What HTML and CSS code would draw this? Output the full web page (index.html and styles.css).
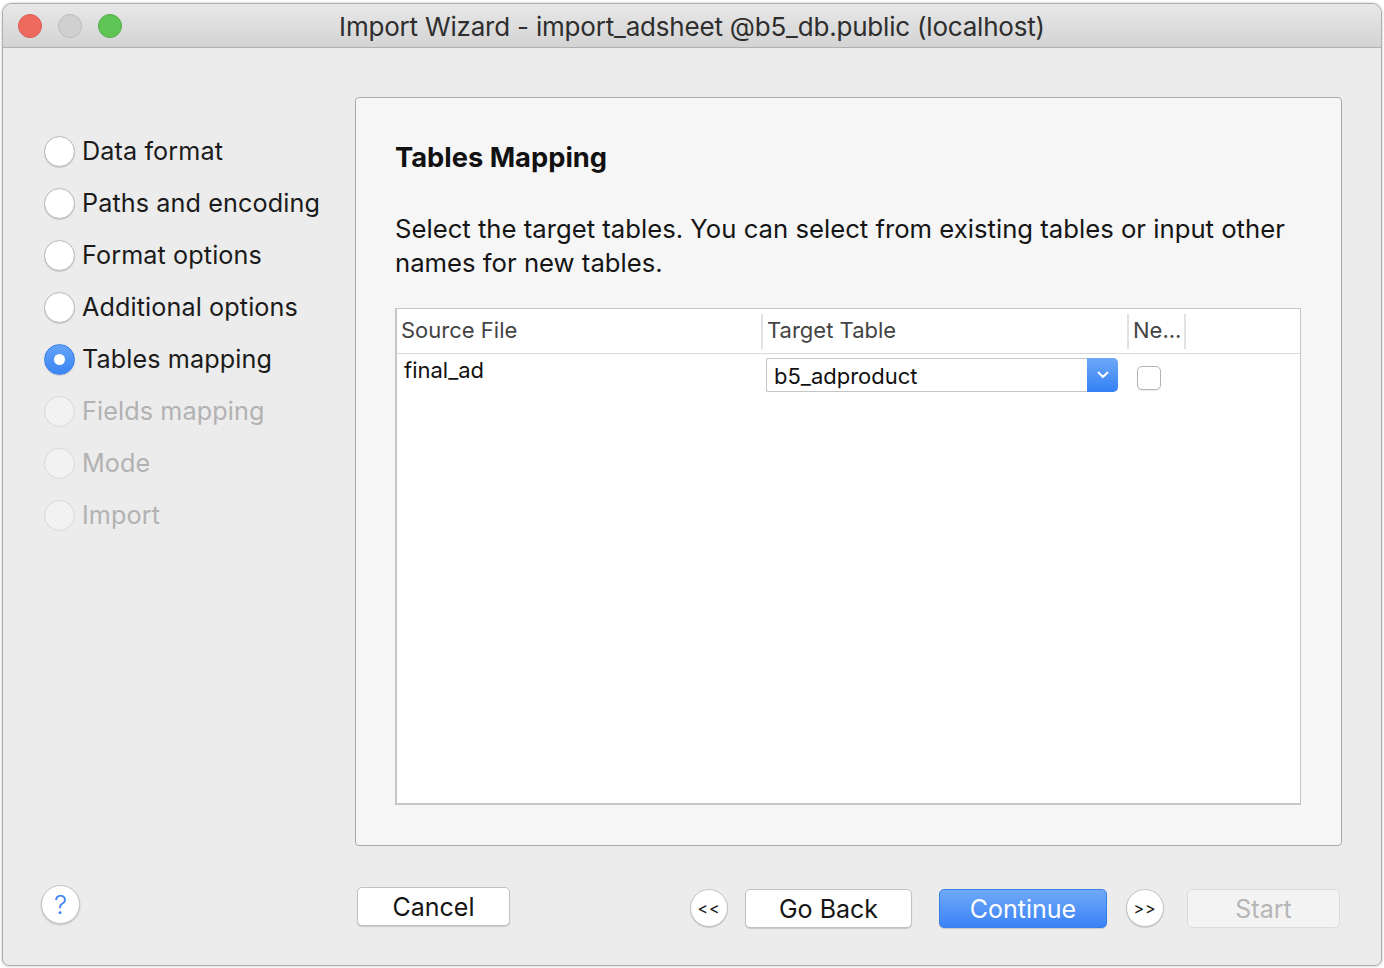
FILE: index.html
```html
<!DOCTYPE html>
<html>
<head>
<meta charset="utf-8">
<title>Import Wizard</title>
<link rel="stylesheet" href="styles.css">
</head>
<body>
<div class="window">
  <div class="titlebar">
    <div class="lights">
      <span class="light red"></span>
      <span class="light gray"></span>
      <span class="light green"></span>
    </div>
    <div class="title">Import Wizard - import_adsheet @b5_db.public (localhost)</div>
  </div>
  <div class="content">
    <ul class="steps">
      <li class="step"><span class="radio"></span>Data format</li>
      <li class="step"><span class="radio"></span>Paths and encoding</li>
      <li class="step"><span class="radio"></span>Format options</li>
      <li class="step"><span class="radio"></span>Additional options</li>
      <li class="step current"><span class="radio"></span>Tables mapping</li>
      <li class="step disabled"><span class="radio"></span>Fields mapping</li>
      <li class="step disabled"><span class="radio"></span>Mode</li>
      <li class="step disabled"><span class="radio"></span>Import</li>
    </ul>
    <section class="panel">
      <h1 class="heading">Tables Mapping</h1>
      <p class="desc">Select the target tables. You can select from existing tables or input other names for new tables.</p>
      <div class="table">
        <div class="thead">
          <div class="th c1">Source File</div>
          <div class="th c2">Target Table</div>
          <div class="th c3">Ne...</div>
        </div>
        <div class="row">
          <div class="td c1">final_ad</div>
          <div class="td c2">
            <div class="combo">
              <span class="combo-text">b5_adproduct</span>
              <span class="combo-btn">
                <svg width="12" height="8" viewBox="0 0 12 8"><path d="M1.5 1.5 L6 6 L10.5 1.5" fill="none" stroke="#fff" stroke-width="2" stroke-linecap="round" stroke-linejoin="round"/></svg>
              </span>
            </div>
          </div>
          <div class="td c3"><span class="check"></span></div>
        </div>
      </div>
    </section>
    <div class="help-cell"><span class="help">?</span></div>
    <div class="buttons">
      <span class="btn cancel">Cancel</span>
      <span class="spacer"></span>
      <span class="round">&lt;&lt;</span>
      <span class="btn back">Go Back</span>
      <span class="btn primary">Continue</span>
      <span class="round next">&gt;&gt;</span>
      <span class="btn disabled-btn">Start</span>
    </div>
  </div>
</div>
</body>
</html>
```
FILE: styles.css
```css
* { box-sizing: border-box; }
html, body { margin: 0; padding: 0; }
body {
  background: #ffffff;
  font-family: Inter, "Liberation Sans", Arial, sans-serif;
  color: #1b1b1b;
  width: 1384px;
  height: 968px;
  overflow: hidden;
}
.window {
  margin: 3px 2px 0 2px;
  height: 963px;
  border: 1px solid #aeaeae;
  border-radius: 10px 10px 7px 7px;
  background: #ececec;
  overflow: hidden;
  display: flex;
  flex-direction: column;
  box-shadow: 0 0 3px rgba(0,0,0,0.25);
}
.titlebar {
  height: 44px;
  flex: none;
  background: linear-gradient(#e8e8e8, #d3d3d3);
  border-bottom: 1px solid #b0b0b0;
  display: flex;
  align-items: center;
  position: relative;
}
.lights {
  display: flex;
  gap: 16px;
  padding-left: 15px;
}
.light {
  width: 24px;
  height: 24px;
  border-radius: 50%;
  display: block;
}
.light.red { background: #ee6a5f; border: 1px solid #d65a4f; }
.light.gray { background: #d0d0d0; border: 1px solid #bcbcbc; }
.light.green { background: #5fc655; border: 1px solid #4fae46; }
.title {
  position: absolute;
  left: 0;
  right: 0;
  top: 0;
  bottom: 0;
  display: flex;
  align-items: center;
  justify-content: center;
  font-size: 26px;
  color: #2e2e2e;
  letter-spacing: -0.2px;
  padding-top: 1px;
}
.content {
  flex: 1;
  display: grid;
  grid-template-columns: 352px 1fr;
  grid-template-rows: 749px auto;
  padding: 49px 39px 0 0;
}
.steps {
  list-style: none;
  margin: 0;
  padding: 28px 0 0 41px;
}
.step {
  height: 52px;
  display: flex;
  align-items: center;
  gap: 7px;
  font-size: 25.2px;
  color: #1b1b1b;
  letter-spacing: 0.1px;
}
.radio {
  width: 31px;
  height: 31px;
  border-radius: 50%;
  background: #ffffff;
  border: 1px solid #b8b8b8;
  box-shadow: 0 1px 1px rgba(0,0,0,0.12);
  flex: none;
  display: flex;
  align-items: center;
  justify-content: center;
}
.step.current .radio {
  background: linear-gradient(#64a3f8, #3a85f5);
  border-color: #3a7fe6;
}
.step.current .radio::after {
  content: "";
  width: 11px;
  height: 11px;
  border-radius: 50%;
  background: #ffffff;
}
.step.disabled { color: #b2b2b2; }
.step.disabled .radio {
  background: #f2f2f2;
  border-color: #d8d8d8;
  box-shadow: none;
}
.panel {
  background: #f6f6f6;
  border: 1px solid #a9a9a9;
  border-radius: 4px;
  padding: 43px 40px 40px 39px;
  display: flex;
  flex-direction: column;
}
.heading {
  margin: 0;
  font-size: 27.3px;
  font-weight: 700;
  line-height: 34px;
  color: #111;
}
.desc {
  margin: 37px 0 0 0;
  font-size: 25.7px;
  line-height: 34px;
  color: #151515;
  padding-right: 10px;
}
.table {
  margin-top: 28px;
  flex: 1;
  background: #ffffff;
  border: 2px solid #c6c6c6;
  border-top-width: 1px;
  border-right-width: 1px;
}
.thead {
  height: 45px;
  border-bottom: 1px solid #d9d9d9;
  display: flex;
  align-items: center;
}
.th {
  height: 35px;
  display: flex;
  align-items: center;
  font-size: 22px;
  color: #444;
  border-right: 2px solid #e2e2e2;
  padding-left: 4px;
  padding-bottom: 2px;
  white-space: nowrap;
}
.c1 { width: 366px; }
.c2 { width: 366px; padding-left: 4px; }
.c3 { width: 57px; padding-left: 4px; }
.row {
  display: flex;
  height: 44px;
}
.td {
  font-size: 22px;
  color: #111;
}
.row .c1 { padding: 3px 0 0 7px; }
.row .c2 { padding: 4px 0 0 3px; }
.row .c3 { padding: 12px 0 0 8px; }
.combo {
  width: 352px;
  height: 34px;
  border: 1px solid #c5c5c5;
  border-right: none;
  border-radius: 2px 5px 5px 2px;
  display: flex;
  align-items: center;
  background: #fff;
}
.combo-text {
  flex: 1;
  padding-left: 7px;
  padding-top: 2px;
  font-size: 22px;
  color: #111;
}
.combo-btn {
  width: 31px;
  height: 34px;
  margin-top: -1px;
  margin-bottom: -1px;
  border-radius: 0 5px 5px 0;
  background: linear-gradient(#6ea9f8, #3380f5);
  display: flex;
  align-items: center;
  justify-content: center;
}
.check {
  display: block;
  width: 24px;
  height: 24px;
  border: 1px solid #b4b4b4;
  border-radius: 5px;
  background: #fff;
  box-shadow: 0 1px 1px rgba(0,0,0,0.08);
}
.help-cell {
  padding: 39px 0 0 38px;
}
.help {
  width: 39px;
  height: 39px;
  border-radius: 50%;
  background: #ffffff;
  border: 1px solid #c4c4c4;
  box-shadow: 0 1px 2px rgba(0,0,0,0.2);
  display: flex;
  align-items: center;
  justify-content: center;
  font-size: 26px;
  font-weight: 300;
  color: #3b82f4;
}
.buttons {
  display: flex;
  align-items: flex-start;
  padding: 41px 2px 0 2px;
}
.spacer { flex: 1; }
.btn {
  height: 39px;
  display: flex;
  align-items: center;
  justify-content: center;
  border-radius: 5px;
  font-size: 25px;
  color: #151515;
  background: #ffffff;
  border: 1px solid #c2c2c2;
  box-shadow: 0 1px 1px rgba(0,0,0,0.15);
}
.cancel { width: 153px; }
.round {
  width: 38px;
  height: 38px;
  border-radius: 50%;
  background: #fff;
  border: 1px solid #c4c4c4;
  box-shadow: 0 1px 1px rgba(0,0,0,0.15);
  display: flex;
  align-items: center;
  justify-content: center;
  font-size: 16px;
  color: #111;
  margin-top: 2px;
  letter-spacing: 1px;
}
.back { width: 167px; margin: 2px 0 0 17px; }
.primary {
  width: 168px;
  margin: 2px 0 0 27px;
  background: linear-gradient(#6fa9f8, #3a82f6);
  border-color: #3a7fe8;
  color: #ffffff;
}
.next { margin-left: 19px; }
.disabled-btn {
  width: 153px;
  margin: 2px 0 0 23px;
  background: #f3f3f3;
  border-color: #dcdcdc;
  box-shadow: none;
  color: #b6b6b6;
}
```
